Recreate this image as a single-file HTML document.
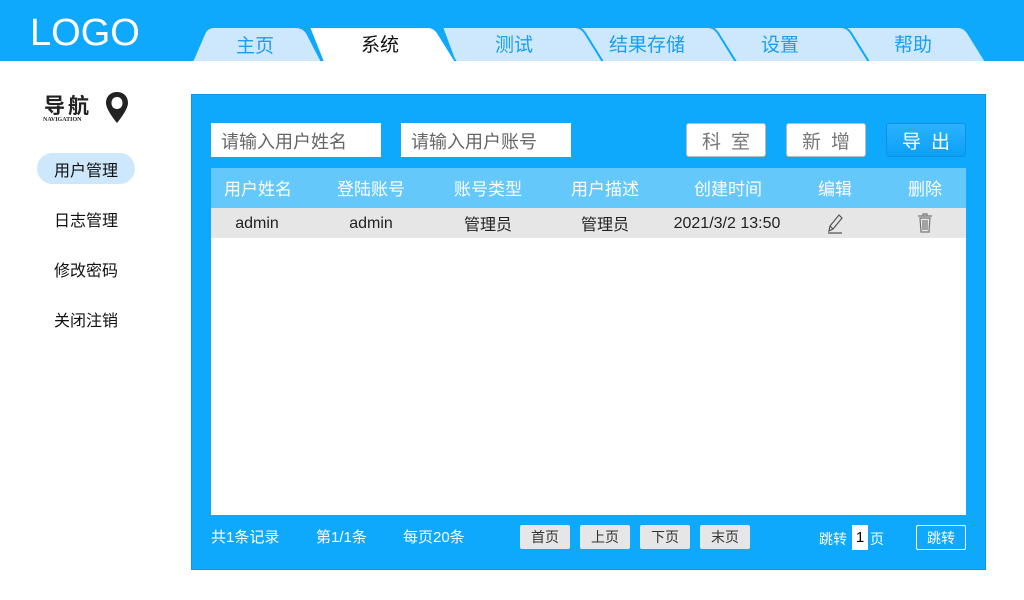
<!DOCTYPE html>
<html><head><meta charset="utf-8"><style>
*{margin:0;padding:0;box-sizing:border-box}
body{width:1024px;height:600px;position:relative;background:#fff;font-family:"Liberation Sans","Noto Sans CJK SC",sans-serif;overflow:hidden}
.a{position:absolute}
.c{display:flex;align-items:center;justify-content:center}
</style></head><body>
<div class="a" style="left:0;top:0;width:1024px;height:61px;background:#0ea8fd"></div>
<div class="a" style="left:30px;top:12px;font-size:38px;color:#fff;line-height:42px">LOGO</div>
<svg class="a" style="left:0;top:0" width="1024" height="62">
<g stroke="#0ea8fd" stroke-width="2">
<path d="M841,27 L958,27 Q964,27 968,33 L986,62 L854,62 Z" fill="#cde7fc"/>
<path d="M708,27 L841,27 Q847,27 851,33 L869,62 L721,62 Z" fill="#cde7fc"/>
<path d="M575,27 L708,27 Q714,27 718,33 L736,62 L588,62 Z" fill="#cde7fc"/>
<path d="M442,27 L575,27 Q581,27 585,33 L603,62 L455,62 Z" fill="#cde7fc"/>
<path d="M309,27 L428,27 Q434,27 438,33 L456,62 L323,62 Z" fill="#fff"/>
<path d="M192,62 L205,32 Q208,27 214,27 L296,27 Q303,27 307,33 L322,62 Z" fill="#cde7fc"/>
</g>
<rect x="0" y="61" width="1024" height="1" fill="#fff"/>
</svg>
<div class="a c" style="left:205px;top:29px;width:100px;height:31px;font-size:19px;color:#1a9ff0">主页</div>
<div class="a c" style="left:330px;top:28px;width:100px;height:31px;font-size:19px;color:#111">系统</div>
<div class="a c" style="left:464px;top:28px;width:100px;height:31px;font-size:19px;color:#1a9ff0">测试</div>
<div class="a c" style="left:597px;top:28px;width:100px;height:31px;font-size:19px;color:#1a9ff0">结果存储</div>
<div class="a c" style="left:730px;top:28px;width:100px;height:31px;font-size:19px;color:#1a9ff0">设置</div>
<div class="a c" style="left:863px;top:28px;width:100px;height:31px;font-size:19px;color:#1a9ff0">帮助</div>

<div class="a" style="left:44px;top:90px;font-size:21px;font-weight:bold;color:#222;letter-spacing:3px">导航</div>
<div class="a" style="left:43px;top:117px;font-size:6px;font-weight:bold;color:#222;font-family:'Liberation Serif',serif">NAVIGATION</div>
<svg class="a" style="left:105px;top:91px" width="24" height="33"><path d="M12,1 C5,1 1,6 1,12 C1,19 12,32 12,32 C12,32 23,19 23,12 C23,6 19,1 12,1 Z M12,6 C15.5,6 17.5,8.5 17.5,12 C17.5,15.5 15.5,18 12,18 C8.5,18 6.5,15.5 6.5,12 C6.5,8.5 8.5,6 12,6 Z" fill="#222" fill-rule="evenodd"/></svg>
<div class="a c" style="left:37px;top:153px;width:98px;height:31px;border-radius:16px;background:#cde7fc;font-size:16px;color:#111">用户管理</div>
<div class="a c" style="left:37px;top:203px;width:98px;height:31px;font-size:16px;color:#111">日志管理</div>
<div class="a c" style="left:37px;top:253px;width:98px;height:31px;font-size:16px;color:#111">修改密码</div>
<div class="a c" style="left:37px;top:303px;width:98px;height:31px;font-size:16px;color:#111">关闭注销</div>

<div class="a" style="left:191px;top:94px;width:795px;height:476px;background:#0ea8fd;border:1px solid #1296e0"></div>
<div class="a" style="left:211px;top:123px;width:170px;height:34px;background:#fff;font-size:18px;color:#666;padding:5px 0 0 10px">请输入用户姓名</div>
<div class="a" style="left:401px;top:123px;width:170px;height:34px;background:#fff;font-size:18px;color:#666;padding:5px 0 0 10px">请输入用户账号</div>
<div class="a c" style="left:686px;top:123px;width:80px;height:34px;background:#fff;border:1px solid #bbb;border-radius:3px;font-size:19px;color:#777;letter-spacing:10px;padding-left:10px">科室</div>
<div class="a c" style="left:786px;top:123px;width:80px;height:34px;background:#fff;border:1px solid #bbb;border-radius:3px;font-size:19px;color:#777;letter-spacing:10px;padding-left:10px">新增</div>
<div class="a c" style="left:886px;top:123px;width:80px;height:34px;background:linear-gradient(#2bb2ff,#0ca0f8);border:1px solid #1290e0;border-radius:3px;font-size:19px;color:#fff;letter-spacing:10px;padding-left:10px">导出</div>

<div class="a" style="left:211px;top:168px;width:755px;height:347px;background:#fff"></div>
<div class="a" style="left:211px;top:168px;width:755px;height:40px;background:#64c8fb"></div>
<div class="a" style="left:211px;top:208px;width:755px;height:30px;background:#e6e6e6"></div>
<div class="a" style="left:0;top:167px;width:1024px;height:40px;font-size:17px;color:#fff">
<span class="a c" style="left:208px;width:100px;height:40px">用户姓名</span>
<span class="a c" style="left:321px;width:100px;height:40px">登陆账号</span>
<span class="a c" style="left:438px;width:100px;height:40px">账号类型</span>
<span class="a c" style="left:555px;width:100px;height:40px">用户描述</span>
<span class="a c" style="left:678px;width:100px;height:40px">创建时间</span>
<span class="a c" style="left:785px;width:100px;height:40px">编辑</span>
<span class="a c" style="left:875px;width:100px;height:40px">删除</span>
</div>
<div class="a" style="left:0;top:209px;width:1024px;height:30px;font-size:16px;color:#222">
<span class="a c" style="left:207px;width:100px;height:30px">admin</span>
<span class="a c" style="left:321px;width:100px;height:30px">admin</span>
<span class="a c" style="left:438px;width:100px;height:28px">管理员</span>
<span class="a c" style="left:555px;width:100px;height:28px">管理员</span>
<span class="a c" style="left:667px;width:120px;height:30px">2021/3/2 13:50</span>
</div>
<svg class="a" style="left:826px;top:212px" width="18" height="22"><path d="M3,19 L4,14 L13,3 L16,6 L7,17 Z M4,14 L7,17 M2,21 L16,21" stroke="#555" stroke-width="1.2" fill="none"/></svg>
<svg class="a" style="left:916px;top:212px" width="18" height="22"><path d="M2,4 L16,4 M7,4 L7,2 L11,2 L11,4 M4,6 L5,20 L13,20 L14,6 Z M7,8 L7,18 M9,8 L9,18 M11,8 L11,18" stroke="#777" stroke-width="1.2" fill="none"/></svg>

<div class="a" style="left:211px;top:526px;font-size:15px;color:#fff">共1条记录</div>
<div class="a" style="left:316px;top:526px;font-size:15px;color:#fff">第1/1条</div>
<div class="a" style="left:403px;top:526px;font-size:15px;color:#fff">每页20条</div>
<div class="a c" style="left:520px;top:525px;width:50px;height:24px;background:#e6e6e6;border-radius:2px;font-size:14px;color:#333">首页</div>
<div class="a c" style="left:580px;top:525px;width:50px;height:24px;background:#e6e6e6;border-radius:2px;font-size:14px;color:#333">上页</div>
<div class="a c" style="left:640px;top:525px;width:50px;height:24px;background:#e6e6e6;border-radius:2px;font-size:14px;color:#333">下页</div>
<div class="a c" style="left:700px;top:525px;width:50px;height:24px;background:#e6e6e6;border-radius:2px;font-size:14px;color:#333">末页</div>
<div class="a" style="left:819px;top:529px;font-size:14px;color:#fff">跳转</div>
<div class="a c" style="left:852px;top:525px;width:16px;height:25px;background:#fff;font-size:15px;color:#000">1</div>
<div class="a" style="left:870px;top:529px;font-size:14px;color:#fff">页</div>
<div class="a c" style="left:916px;top:525px;width:50px;height:25px;border:1px solid #fff;border-radius:2px;font-size:14px;color:#fff">跳转</div>
</body></html>
